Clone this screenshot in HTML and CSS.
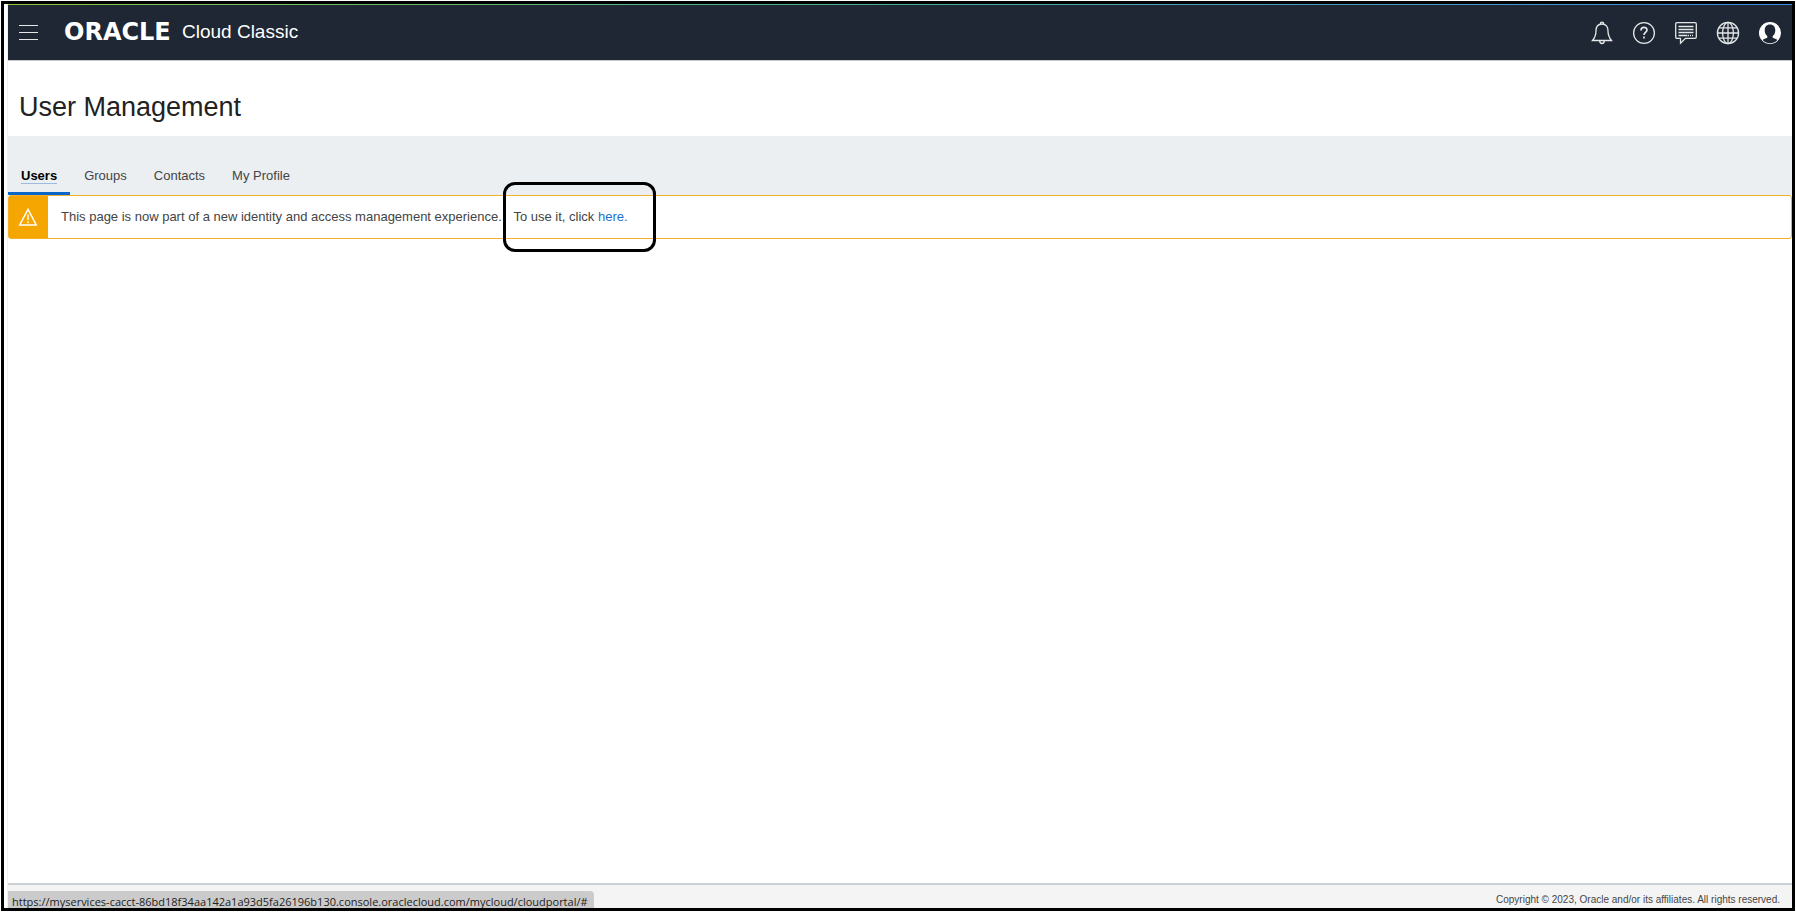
FILE: index.html
```html
<!DOCTYPE html>
<html lang="en">
<head>
<meta charset="utf-8">
<title>User Management</title>
<link rel="stylesheet" href="styles.css">
</head>
<body>
<div class="frame">
  <div class="page">
    <header class="topbar">
      <button class="icon-button menu" aria-label="Menu">
        <svg width="20" height="16" viewBox="0 0 20 16" fill="none" stroke="currentColor"><path d="M0 .5h19M0 7.500h19M0 14.500h19"/></svg>
      </button>
      <div class="brand"><span class="logo">ORACLE</span><span class="product">Cloud Classic</span></div>
      <nav class="actions" aria-label="Tools">
        <button class="icon-button" aria-label="Notifications">
          <svg width="24" height="24" viewBox="0 0 24 24" fill="none" stroke="currentColor" stroke-width="1.300"><path d="M12 3c-4 0-6 3-6 7 0 4-.8 6.300-3.500 9.500h19c-2.700-3.200-3.500-5.500-3.500-9.500 0-4-2-7-6-7zM10.300 3c0-2.400 3.400-2.400 3.400 0M9.700 19.700c0 3.700 4.600 3.700 4.600 0"/></svg>
        </button>
        <button class="icon-button" aria-label="Help">
          <svg width="24" height="24" viewBox="0 0 24 24" fill="none" stroke="currentColor" stroke-width="1.300"><circle cx="12" cy="12" r="10.400"/><path stroke-width="1.700" d="M9 9.500c0-4 6-4 6-.5 0 2.500-3 2.400-3 5M12 15.600v2"/></svg>
        </button>
        <button class="icon-button" aria-label="Chat">
          <svg width="24" height="24" viewBox="0 0 24 24" fill="none" stroke="currentColor" stroke-width="1.300"><path d="M3 1.700h18q1.300 0 1.300 1.300v13q0 1.300-1.300 1.300H11.500L6.500 22.300v-5H3q-1.300 0-1.300-1.300V3q0-1.300 1.300-1.300z"/><path d="M4.500 5.500h15M4.500 8.500h15M4.500 11.500h15M4.500 14.500h9"/><path stroke-dasharray="1 1" d="M14 14.500h5"/></svg>
        </button>
        <button class="icon-button" aria-label="Language">
          <svg width="24" height="24" viewBox="0 0 24 24" fill="none" stroke="currentColor" stroke-width="1.300"><circle cx="12" cy="12" r="10.600"/><ellipse cx="12" cy="12" rx="5.400" ry="10.600"/><path d="M12 1.400v21.200M1.400 12h21.200M3 6.800h18M3 17.200h18"/></svg>
        </button>
        <button class="icon-button" aria-label="Profile">
          <svg width="24" height="24" viewBox="0 0 24 24"><circle cx="12" cy="12" r="11" fill="#fff"/><path fill="#1e2733" d="M12 3.500c-3.500 0-5.300 2.400-5.300 5.700 0 2.500 1 4.600 2.600 5.800v1.800c-1.700.8-3.400 1.200-4.700 2.200 4 4.300 10.800 4.300 14.800 0-1.300-1-3-1.400-4.700-2.200V15c1.600-1.200 2.600-3.300 2.600-5.800 0-3.300-1.800-5.700-5.300-5.700z"/></svg>
        </button>
      </nav>
    </header>
    <div class="title-bar"><h1>User Management</h1></div>
    <nav class="tabs" aria-label="Sections">
      <a class="tab active" href="#"><span>Users</span></a>
      <a class="tab" href="#">Groups</a>
      <a class="tab" href="#">Contacts</a>
      <a class="tab" href="#">My Profile</a>
    </nav>
    <main>
      <div class="notice">
        <div class="notice-icon">
          <svg width="20" height="20" viewBox="0 0 20 20" fill="none" stroke="#fff" stroke-width="1.500"><path d="M10 2.300L18.300 18H1.700z"/><path d="M10 7.500v5.500M10 14.300v2"/></svg>
        </div>
        <p>This page is now part of a new identity and access management experience. <span class="callout">To use it, click <a href="#">here.</a></span></p>
      </div>
    </main>
    <footer>
      <div class="status">https://myservices-cacct-86bd18f34aa142a1a93d5fa26196b130.console.oraclecloud.com/mycloud/cloudportal/#</div>
      <small>Copyright © 2023, Oracle and/or its affiliates. All rights reserved.</small>
    </footer>
  </div>
</div>
</body>
</html>
```
FILE: styles.css
```css
* { box-sizing: border-box; }
body {
  margin: 0;
  background: #fff;
  color: #444;
  font: 13px/16px "Liberation Sans", Arial, sans-serif;
}
.frame {
  height: 100vh;
  padding: 1px;
  display: flex;
}
.page {
  flex: 1;
  display: flex;
  flex-direction: column;
  border: 3px solid #000;
  background: linear-gradient(90deg, #fff 3px, #e6e6e6 4px, #fff 4px);
  padding-left: 4px;
  overflow: hidden;
}
.topbar {
  height: 57px;
  display: flex;
  align-items: center;
  padding: 1px 10px 0 11px;
  background: linear-gradient(90deg, #8dc63f, #3fae9a 50%, #3b8eea) top / 100% 1px no-repeat #1e2733;
  border-bottom: 1px solid #c4c8cc;
  color: #e4e6e8;
}
.icon-button {
  display: flex;
  padding: 0;
  border: 0;
  background: none;
  color: inherit;
}
.brand {
  display: flex;
  align-items: center;
  margin-left: 25px;
  padding-bottom: 2px;
  color: #fff;
}
.logo {
  width: 118px;
  font: bold 24px/24px "DejaVu Sans", sans-serif;
}
.product { font-size: 19px; line-height: 24px; }
.actions {
  display: flex;
  gap: 18px;
  margin-left: auto;
}
.title-bar { padding: 31px 11px 14px; }
h1 {
  margin: 0;
  color: #222;
  font-size: 27px;
  line-height: 30px;
  font-weight: 400;
}
.tabs {
  display: flex;
  align-items: flex-end;
  gap: 1px;
  height: 59px;
  background: #ebeff2;
}
.tab {
  padding: 0 13px 8px;
  border-bottom: 3px solid transparent;
  color: #444;
  text-decoration: none;
}
.tab.active {
  border-color: #0a66c8;
  color: #000;
  font-weight: 700;
}
.tab.active span { box-shadow: 0 1px #9bbbe0; }
main { flex: 1; }
.notice {
  display: flex;
  height: 44px;
  border: 1px solid #f3b02c;
  border-radius: 3px;
}
.notice-icon {
  display: flex;
  align-items: center;
  justify-content: center;
  width: 39px;
  padding-right: 2px;
  background: #f6a600;
}
.notice p { margin: 13px; }
.callout {
  position: relative;
  margin-left: 8px;
}
.callout::after {
  content: "";
  position: absolute;
  inset: -27px -28px -28px -10px;
  border: 3px solid #000;
  border-radius: 12px;
  pointer-events: none;
}
.callout a { color: #1a6fd0; text-decoration: none; }
footer {
  display: flex;
  justify-content: space-between;
  height: 25px;
  border-top: 2px solid #ccd1d5;
  background: #f4f4f4;
}
.status {
  margin-top: 6px;
  padding: 2px 6px 0 4px;
  border-top-right-radius: 4px;
  background: #cbcbcb;
  color: #222;
  font: 11px/18px "Open Sans", sans-serif;
}
footer small {
  padding: 7px 12px 0;
  font-size: 10px;
}
```
